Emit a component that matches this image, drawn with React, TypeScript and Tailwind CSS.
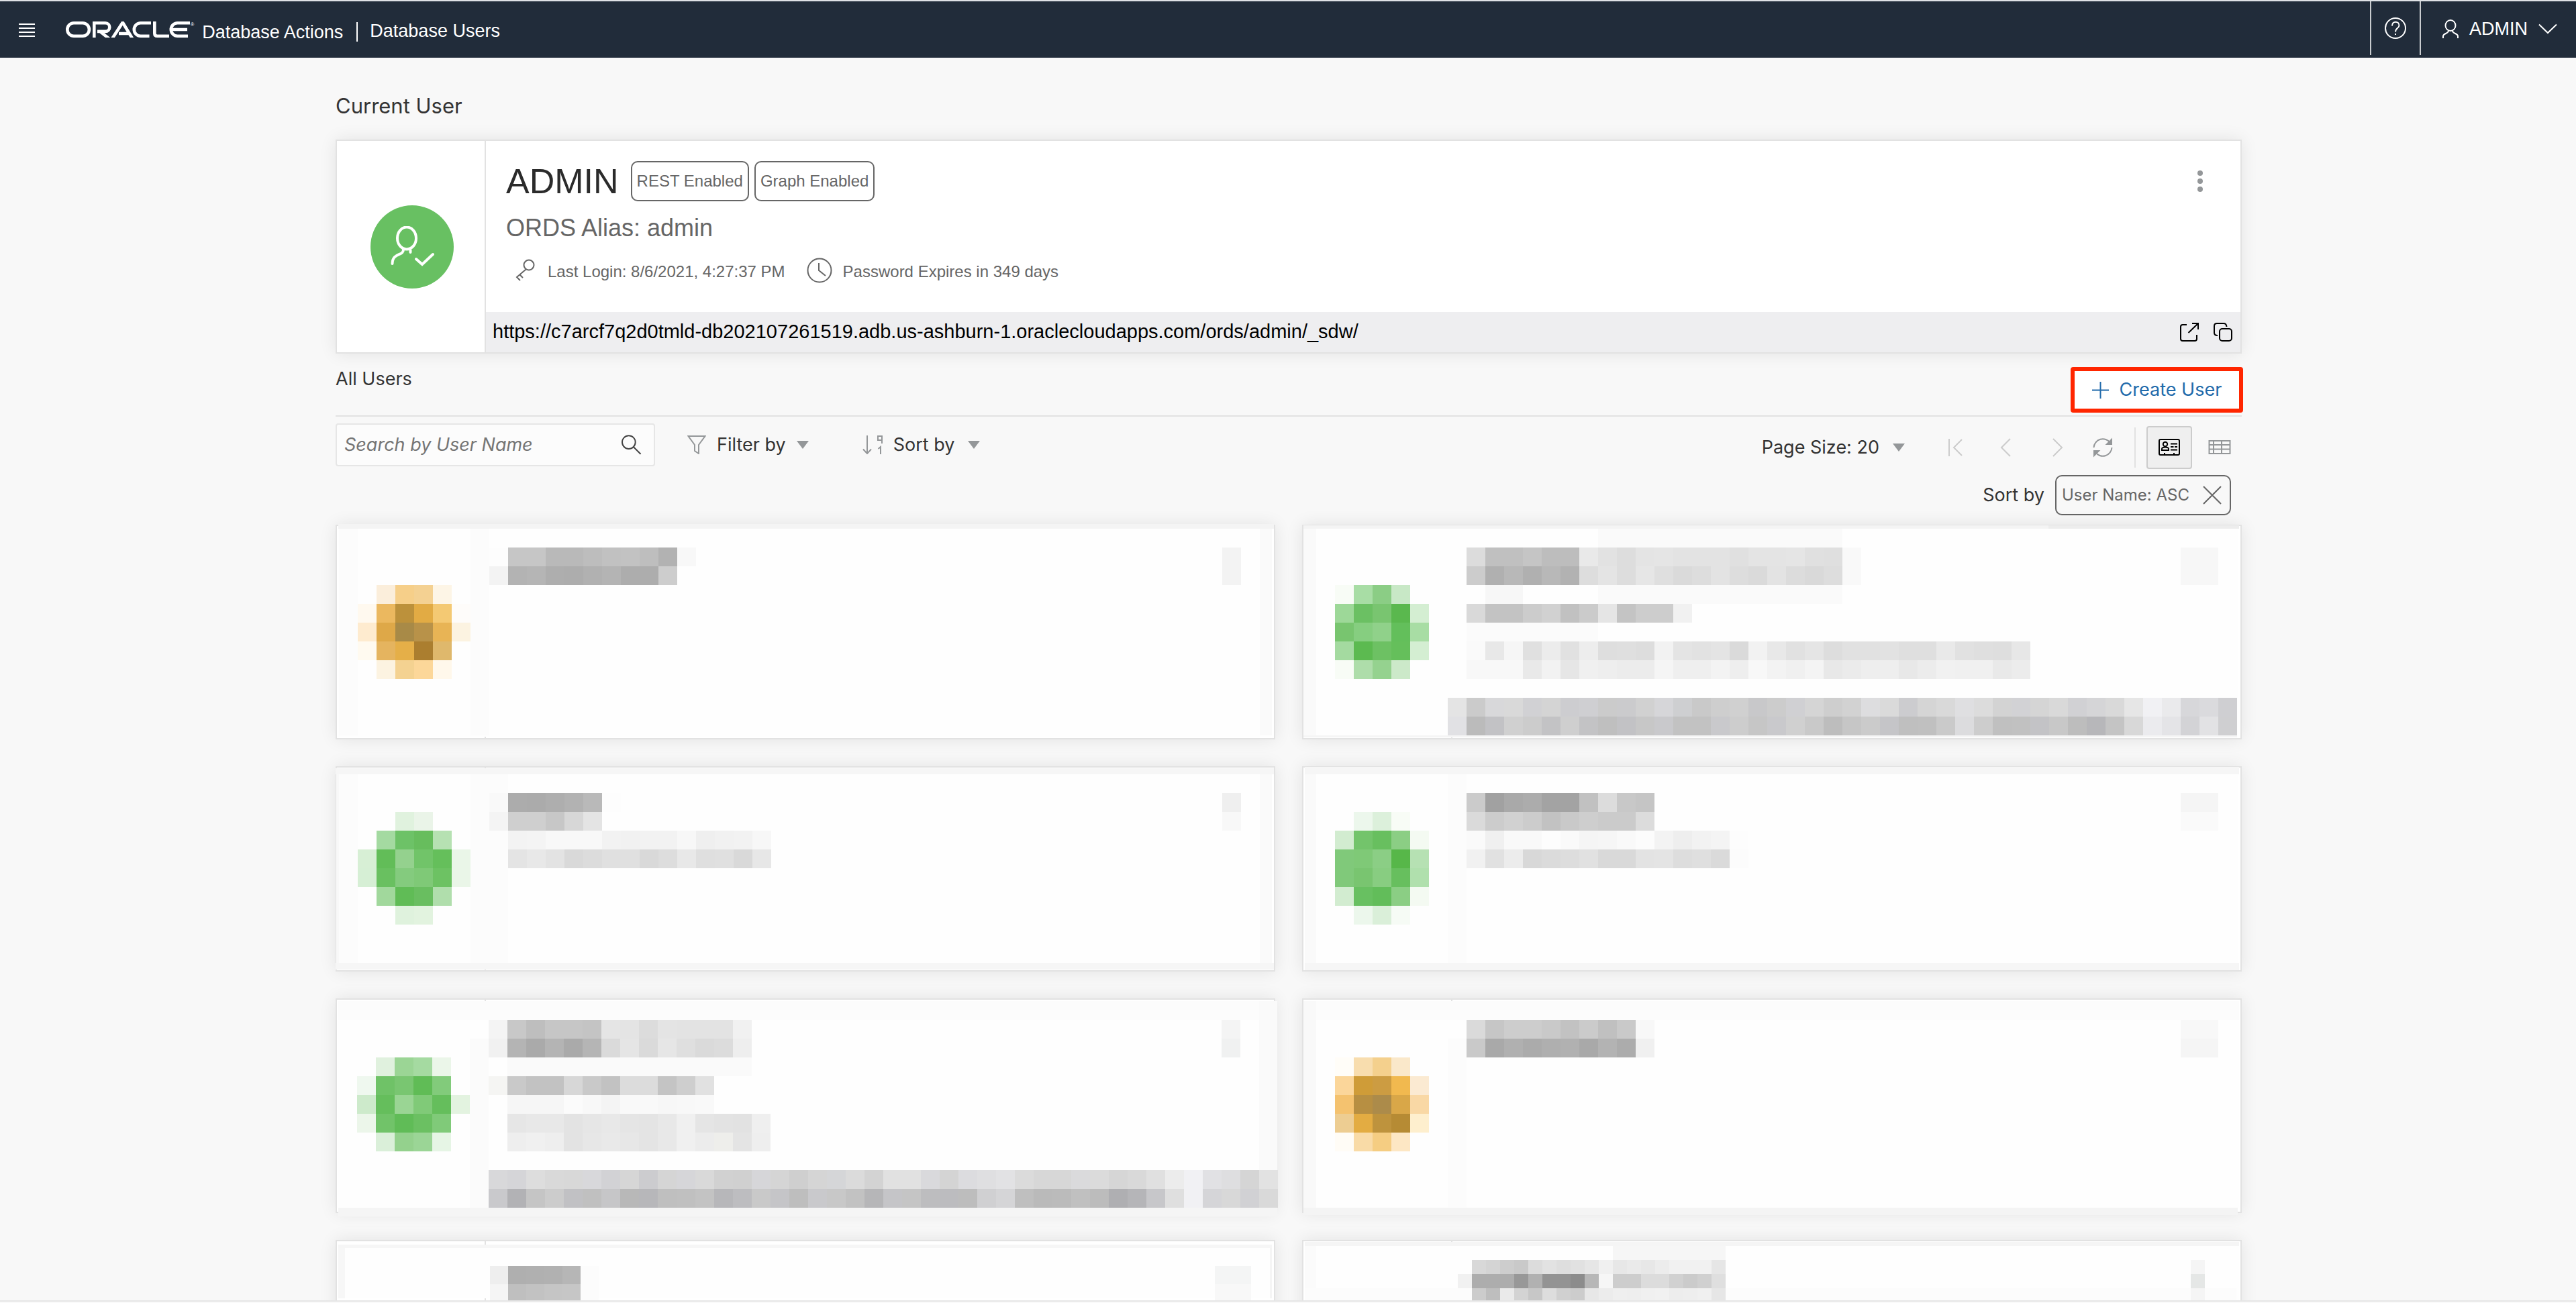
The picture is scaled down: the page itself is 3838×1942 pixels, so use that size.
import React from "react";

type Run = [row: number, col: number, shades: string];

type MosaicSpec = {
  x: number;
  y: number;
  cell: number;
  cover: [x: number, y: number, w: number, h: number];
  bands: [x: number, y: number, w: number, h: number, fill: string][];
  runs: Run[];
};

const toFill = (s: string) => (s.length === 2 ? `#${s}${s}${s}` : `#${s}`);

function Mosaic({ spec }: { spec: MosaicSpec }) {
  const { x, y, cell, cover, bands, runs } = spec;
  return (
    <svg
      className="pointer-events-none absolute -left-0.5 -top-0.5 h-full w-full overflow-visible"
      shapeRendering="crispEdges"
      aria-hidden="true"
    >
      <rect x={cover[0]} y={cover[1]} width={cover[2]} height={cover[3]} fill="#fefefe" />
      {bands.map((b, i) => (
        <rect key={i} x={b[0]} y={b[1]} width={b[2]} height={b[3]} fill={b[4]} />
      ))}
      {runs.flatMap(([row, col, shades], r) =>
        shades
          .split(" ")
          .map((s, i) => (
            <rect
              key={`${r}-${i}`}
              x={x + (col + i) * cell}
              y={y + row * cell}
              width={cell}
              height={cell}
              fill={toFill(s)}
            />
          )),
      )}
    </svg>
  );
}

const users: { height: string; mosaic: MosaicSpec }[] = [
  {
    height: "h-80",
    mosaic: {
      x: 5, y: 6, cell: 28,
      cover: [3, 2, 1390, 314],
      bands: [
        [4, -1, 1394, 7, "#f4f4f4"],
        [5, 6, 28, 308, "#fcfcfc"],
        [201, 6, 28, 308, "#fcfcfc"],
        [1377, 6, 18, 308, "#fafafa"],
      ],
      runs: [
        [1, 8, "fd c6 c6 b9 b9 bd c1 c2 be b2 f8"],
        [2, 8, "f3 b3 b5 ae ad b1 b4 ad ad cd fe"],
        [1, 47, "f3"],
        [2, 47, "f3"],
        [3, 2, "fbeedb f6cf89 f4d192 fdf5e6"],
        [4, 1, "fff9ef ebb85f bc913b e2ab44 f4c973 fefcfa"],
        [5, 1, "feebcf dea848 a88a47 b89249 e8b455 fcf3e1"],
        [6, 1, "fffaf0 e5b45f e5af48 ab7e2f dfb86c"],
        [7, 2, "fcf3e1 f4d291 fcd799 fff8eb"],
      ],
    },
  },
  {
    height: "h-80",
    mosaic: {
      x: 21, y: 6, cell: 28,
      cover: [2, 2, 1392, 314],
      bands: [
        [2, 1, 1110, 5, "#f4f4f4"],
        [1112, 1, 284, 5, "#ededed"],
        [2, 6, 19, 308, "#fafafa"],
        [441, 6, 364, 28, "#fafafa"],
        [441, 90, 364, 28, "#fafafa"],
        [245, 146, 196, 28, "#fbfbfb"],
        [2, 314, 1391, 3, "#f5f5f5"],
      ],
      runs: [
        [1, 8, "dc c0 c0 c5 bd bd e9 e2 dd e4 e5 e3 e3 e3 e0 e4 e4 e5 e0 df f9"],
        [2, 8, "cc b0 b8 b0 b8 b2 dd e4 dd e6 df da dd e3 dd da e3 dc d9 dd f9"],
        [1, 46, "f7 f7"],
        [2, 46, "f7 f7"],
        [3, 1, "f8fcf6 a8dda5 8bcd85 c8e8c6"],
        [3, 9, "f7 f7"],
        [4, 1, "9dd898 6bc063 79c570 5ab84e d4eed2"],
        [4, 8, "d9 c3 c3 cc d1 c1 cb e5 c4 cd cd f1"],
        [5, 1, "78c56f 86ce80 90d18a 63bf5b a8dda4"],
        [6, 1, "a4daa0 5cba50 6dc163 65bf5b d4eed2"],
        [6, 8, "fa e8 f6 e0 ec e1 ed de df dd f2 e4 e2 e4 da f2 e8 e1 e5 dd e1 e1 e2 df df e9 e1 df de e7"],
        [7, 1, "f8fcf6 aeddaa 95d28f cce9c9"],
        [7, 8, "f8 f8 f8 e9 f2 e6 f0 ee ec ec f5 ef ef f3 ee f8 f3 f0 f4 e8 eb ee ee e8 ec f1 f0 f0 e9 ec"],
        [9, 7, "e4 cb d8d8da d9 d1d1d4 d4 cdcdd0 cfcfd2 cb cbcbcd d1 d6d6d9 cecfd1 c9 ce d0 c8c8ca cc d0d0d3 d5 ce d2 dddddf da cccccf d5 d9 dfdfe1 dc d3 d2d2d5 d5 d9 d1d1d4 d5d5d7 d9 e6 f1f1f4 eaeaec d7d7da dadadd cfcfd2"],
        [10, 7, "e1e1e4 bb c2c2c5 d0 cc c3c3c5 cf c3c3c5 bf c2c2c5 c7 c9c9cc c2 c2 c9c9cc cd c6 c9c9cc d0 c9 bd c6 cb c5c5c8 bf c0 ca dcdcde cd c0 c1 c3c3c6 c8 bd b7b7ba c4 d8 ebebee e4e4e7 d3d3d6 e2e2e4 cfcfd1"],
      ],
    },
  },
  {
    height: "h-[306px]",
    mosaic: {
      x: 5, y: 12, cell: 28,
      cover: [2, 3, 1392, 300],
      bands: [
        [0, 3, 1398, 9, "#f6f6f6"],
        [0, 293, 1398, 10, "#f6f6f6"],
        [1, 12, 4, 281, "#f8f8f8"],
        [5, 12, 28, 281, "#fcfcfc"],
        [201, 12, 56, 281, "#fcfcfc"],
        [1377, 12, 18, 281, "#fafafa"],
      ],
      runs: [
        [1, 8, "f9 ac ab ae b2 b9 fd"],
        [2, 3, "e0f2de eaf4e8"],
        [2, 8, "f4 cf cf c7 d7 e4"],
        [1, 47, "ef"],
        [2, 47, "f8"],
        [3, 2, "a4daa1 6dc267 67bd5d b6e1b2"],
        [3, 9, "f3 f4 f8 f8 f8 f2 f1 f2 f2 f7 ef f1 f2 f7"],
        [4, 1, "d7efd5 62bd58 94d18e 71c469 65bf5b eaf6e8"],
        [4, 9, "e4 e8 e3 d9 dc e0 e0 d9 dd e8 df e0 d9 e7"],
        [5, 1, "d6efd5 69c060 84cb7e 7fc977 6dc263 eaf6e8"],
        [6, 2, "a1d89c 60bc56 69be60 b0deac"],
        [7, 3, "dff2dd e2f3df"],
      ],
    },
  },
  {
    height: "h-[306px]",
    mosaic: {
      x: 21, y: 12, cell: 28,
      cover: [4, 2, 1390, 302],
      bands: [
        [4, 1, 1392, 11, "#f6f6f6"],
        [4, 293, 1392, 11, "#f6f6f6"],
        [4, 12, 17, 281, "#fafafa"],
        [217, 12, 28, 281, "#fcfcfc"],
      ],
      runs: [
        [1, 8, "cb a1 a9 ac a3 a3 c1 dc c8 c5"],
        [2, 2, "ecf7ec dcf0db f8fcf6"],
        [2, 8, "da cc d1 cc c2 c9 ce cb cb dc"],
        [1, 46, "f5 f5"],
        [2, 46, "fa fa"],
        [3, 1, "d2ecd0 73c46b 68bf5f 8bce84 f4faf2"],
        [3, 8, "fa f0 f9 f9 fd fa f5 f6 f9 fc f3 ee f2 f4 fd"],
        [4, 1, "80c97a 7fc977 8bce85 57b749 b6e1b3"],
        [4, 8, "f1 e1 ec d8 db dd e1 d9 d9 e3 e4 dd df da fc"],
        [5, 1, "80c97a 79c570 88cd81 67bf5e b0e0ad"],
        [6, 1, "d2ecd0 68c061 62bd5a 8bce84 f4faf2"],
        [7, 2, "ecf7ec daefd9 f6fbf5"],
      ],
    },
  },
  {
    height: "h-80",
    mosaic: {
      x: 4, y: 4, cell: 28,
      cover: [4, 4, 1399, 309],
      bands: [
        [4, 4, 1399, 28, "#fcfcfc"],
        [200, 60, 28, 253, "#fbfbfb"],
        [256, 88, 364, 28, "#fafafa"],
        [1376, 4, 27, 252, "#fafafa"],
        [4, 312, 1399, 13, "#f5f5f5"],
      ],
      runs: [
        [1, 8, "f4 c8 be c6 c6 c4 e5 e4 dc e4 e3 e3 e3 f1"],
        [2, 8, "f1 b4 aa b4 aa b5 da e5 da e6 df da dc ee"],
        [1, 47, "f4"],
        [2, 47, "f0f1f1"],
        [3, 2, "e0f1de 9bd595 a5daa1 ebf6e9"],
        [4, 1, "eff8ef 6fc267 79c671 60bc56 82cb7b"],
        [4, 8, "f5f5f3 c9 c2 c2 d7 c9 c2 dc dc c4 ce e1"],
        [5, 1, "cdeacb 65be5c 9ad594 80ca78 65be5c e3f3e0"],
        [5, 9, "f6 f6 f6 fb f8 f4 f9 f9 f7 f8 f9"],
        [6, 1, "ecf6ea 71c369 60bc57 6bc062 80ca79"],
        [6, 9, "e6 e8 e8 e3 e6 e8 e5 e4 e8 f0 e5 e3 e2 ef"],
        [7, 2, "daefd9 94d18d 9bd596 e6f5e5"],
        [7, 9, "ee f0 ee e3 e7 e9 e7 e4 e8 f0 ec eeeeeb e4 ee"],
        [9, 8, "d8d8da d5d5d8 dd d9 d8 d8d8db d2d2d5 d6 cccccf d5 d6d6d9 d9 d1 d0 d6d6d9 d5 cf d5 d5d6d8 db d3 e1 e1 d9d9dc d4 dcdcdf dfdfe1 e2e2e4 db d7 d7 dadadc db d6 d9 e0 ec f1f1f4 e1e1e4 dedee0 d5 e2"],
        [10, 8, "c9c9cc b2b2b5 c5 cc c1c1c4 c0 c6c6c8 b8 b7b7ba bf c0 c3 b7b7ba bdbdc0 c9 c5c5c8 be c9c9cc c8 c2 b6b6b8 c5c5c8 c5 bdbdbf bcbcbf bd d0d0d2 d5d5d7 bf ba bb c0 bc afafb2 b5b5b8 c7c7ca df f1f1f4 d5d5d8 d8 d1d1d4 d9"],
      ],
    },
  },
  {
    height: "h-80",
    mosaic: {
      x: 21, y: 4, cell: 28,
      cover: [2, 4, 1394, 309],
      bands: [
        [2, 4, 1394, 28, "#fcfcfc"],
        [2, 4, 19, 309, "#f9f9f9"],
        [217, 60, 28, 252, "#fcfcfc"],
        [2, 312, 1392, 11, "#f4f4f4"],
      ],
      runs: [
        [1, 8, "da c6 cd cd c9 c2 cb c0 c9 f8"],
        [2, 8, "c9 a9 b0 ab af b1 a9 b3 ac f0"],
        [1, 46, "f8 f8"],
        [2, 46, "f5 f5"],
        [3, 1, "fffdf8 f8ddae f4d08d fae8ca"],
        [4, 1, "fbd69a cf9c38 cc9c42 f1b94f fbead2"],
        [5, 1, "f4c26f b78f42 ac8b4a d9a748 f9d8a5"],
        [6, 1, "edcd92 e3ac42 be933d b68b34 feefce"],
        [7, 1, "fffcf6 f9dba7 f5cd82 fde7c4"],
      ],
    },
  },
  {
    height: "h-80",
    mosaic: {
      x: 14, y: 39, cell: 27,
      cover: [4, 7, 1390, 80],
      bands: [
        [4, 7, 1391, 5, "#f6f6f6"],
        [4, 12, 10, 75, "#f7f7f7"],
        [1392, 12, 3, 75, "#f5f5f5"],
      ],
      runs: [
        [0, 8, "ee af b0 b1 b6 fc"],
        [1, 8, "f5 bf c2 c5 c6 fc"],
        [0, 48, "f4f5f5 f4f5f5"],
        [1, 48, "f8 f8"],
      ],
    },
  },
  {
    height: "h-80",
    mosaic: {
      x: 253, y: 30, cell: 21,
      cover: [4, 3, 1392, 100],
      bands: [
        [4, 3, 1392, 6, "#f5f5f5"],
        [4, 9, 17, 90, "#fbfbfb"],
        [463, 9, 168, 21, "#f6f6f6"],
        [4, 72, 1388, 22, "#fcfcfc"],
      ],
      runs: [
        [0, 0, "d8 d4 cd c9 dc e2 de e1 e6 f0 e7 ea e7 ec f1 f1 f1 e6"],
        [1, -1, "f1 ad ad ad 98 b1 93 93 8c b7 f6 cd cd dc dc d1 cb d0 df"],
        [2, 0, "cc be ea d3 c7 dd d0 cc e7 ec ef ee f0 f1 ed ee f0 e6"],
        [0, 51, "f5"],
        [1, 51, "e5e7e6"],
        [2, 51, "f5"],
      ],
    },
  },
];

function OracleLogo() {
  return (
    <svg width="186" height="24" viewBox="0 0 186 24" fill="none" stroke="#fff" strokeWidth="4.6" role="img" aria-label="Oracle">
      <rect x="2.3" y="2.3" width="32.6" height="19.4" rx="9.7" />
      <path d="M42.3 24V2.3H59a6.3 6.3 0 0 1 0 12.6H47M50.500 14.500L64.500 25.500" />
      <path d="M69.500 25L84.800 1.500L99 25M79 18H95" />
      <path d="M127 2.300H111.500a9.700 9.700 0 0 0 0 19.400H124.500" />
      <path d="M132.300 0V17.700Q132.300 21.700 136.300 21.700H154" />
      <path d="M185 2.300H166.500a9.700 9.700 0 0 0 0 19.400H182M158 12H181" />
    </svg>
  );
}

function Caret() {
  return (
    <svg width="18" height="12" viewBox="0 0 18 12" aria-hidden="true">
      <path d="M0 0H18L9 12Z" fill="#949799" />
    </svg>
  );
}

function Header() {
  return (
    <header className="flex h-[86px] shrink-0 items-center border-t-2 border-[#dfe2e6] bg-[#212c3a] text-[27px] text-white">
      <button type="button" aria-label="Navigation menu" className="ml-7 mt-px">
        <svg width="24" height="20" viewBox="0 0 24 20" fill="#fff" aria-hidden="true">
          <path d="M0 0h24v2H0zM0 6h24v2H0zM0 12h24v2H0zM0 18h24v2H0z" />
        </svg>
      </button>
      <div className="ml-[46px] flex items-start">
        <OracleLogo />
        <span className="text-[7px] leading-[10px]">®</span>
      </div>
      <span className="ml-3 mt-2">Database Actions</span>
      <span className="ml-5 mt-1.5 h-[29px] w-0.5 bg-white" />
      <h1 className="ml-[18px] mt-1">Database Users</h1>
      <div className="ml-auto flex items-center self-stretch">
        <button
          type="button"
          aria-label="Help"
          className="mb-1 flex w-[76px] items-center justify-center self-stretch border-x-2 border-[#c9cccf]"
        >
          <svg width="32" height="32" viewBox="0 0 32 32" fill="none" stroke="#fff" strokeWidth="2" aria-hidden="true">
            <circle cx="16" cy="16" r="15" />
            <path d="M11 12.500C11 4.500 21.500 5 21.500 12C21.500 16 16 15.500 16 21.500" />
            <path d="M15 24h2v2h-2z" fill="#fff" stroke="none" />
          </svg>
        </button>
        <button type="button" className="ml-8 mr-7 flex items-center pb-0.5">
          <svg width="24" height="28" viewBox="0 0 24 28" fill="none" stroke="#fff" strokeWidth="2" aria-hidden="true">
            <ellipse cx="12" cy="9" rx="7.500" ry="8" />
            <path d="M1 28V25C1 20 9 22 9 16.500M23 28V25C23 20 15 22 15 16.500" />
          </svg>
          <span className="ml-4">ADMIN</span>
          <svg className="ml-4" width="28" height="16" viewBox="0 0 28 16" fill="none" stroke="#fff" strokeWidth="2" aria-hidden="true">
            <path d="M1 1.500L14 14L27 1.500" />
          </svg>
        </button>
      </div>
    </header>
  );
}

function CurrentUser() {
  return (
    <section
      aria-label="Current user"
      className="mt-[30px] flex h-[319px] border-2 border-[#e2e2e2] bg-white shadow-[0_0_24px_rgba(0,0,0,0.09)]"
    >
      <div className="flex w-[222px] shrink-0 items-center justify-center border-r-2 border-[#e2e2e2] pl-1">
        <div className="flex size-[124px] items-center justify-center rounded-full bg-[#68c062]">
          <svg width="66" height="62" viewBox="0 0 66 62" fill="none" stroke="#fff" strokeWidth="4" strokeLinecap="round" aria-hidden="true">
            <ellipse cx="25" cy="18" rx="14" ry="16.500" />
            <path d="M20 35C20 45 4 39 3.500 56M30.500 36V39" />
            <path d="M39 49L48 57L64 42" />
          </svg>
        </div>
      </div>
      <div className="flex min-w-0 grow flex-col">
        <div className="flex grow items-start pl-[30px] pt-[30px]">
          <div className="text-2xl text-[#666]">
            <div className="flex items-center">
              <h3 className="text-[52px] leading-[60px] text-[#2b2b2b]">ADMIN</h3>
              <span className="ml-[18px] flex h-[60px] items-center rounded-[10px] border-2 border-[#666] px-[7px]">REST Enabled</span>
              <span className="ml-2 flex h-[60px] items-center rounded-[10px] border-2 border-[#666] px-[7px]">Graph Enabled</span>
            </div>
            <p className="mt-5 text-4xl leading-10">ORDS Alias: admin</p>
            <div className="mt-[23px] flex h-10 items-center pl-3">
              <svg width="32" height="34" viewBox="0 0 32 34" fill="none" stroke="#666" strokeWidth="2" aria-hidden="true">
                <circle cx="22" cy="9" r="7.500" />
                <path d="M17.500 15.500L4 27L9 32M8.500 23.500L13 28" />
              </svg>
              <span className="ml-[18px] mt-1">Last Login: 8/6/2021, 4:27:37 PM</span>
              <svg className="ml-8" width="38" height="38" viewBox="0 0 38 38" fill="none" stroke="#666" strokeWidth="2" aria-hidden="true">
                <circle cx="19" cy="19" r="17.500" />
                <path d="M18 8V19L28 27" />
              </svg>
              <span className="ml-4 mt-1">Password Expires in 349 days</span>
            </div>
          </div>
          <button type="button" aria-label="User actions" className="ml-auto mr-14 mt-[13px]">
            <svg width="8" height="34" viewBox="0 0 8 34" fill="#949799" aria-hidden="true">
              <circle cx="4" cy="5" r="4" />
              <circle cx="4" cy="17" r="4" />
              <circle cx="4" cy="29" r="4" />
            </svg>
          </button>
        </div>
        <div className="flex h-[60px] shrink-0 items-center bg-[#eeeef0] pl-2.5 pr-3 text-[29px] text-black">
          <a href="https://c7arcf7q2d0tmld-db202107261519.adb.us-ashburn-1.oraclecloudapps.com/ords/admin/_sdw/">
            https://c7arcf7q2d0tmld-db202107261519.adb.us-ashburn-1.oraclecloudapps.com/ords/admin/_sdw/
          </a>
          <button type="button" aria-label="Open in new tab" className="ml-auto">
            <svg width="28" height="30" viewBox="0 0 28 30" fill="none" stroke="#000" strokeWidth="2" aria-hidden="true">
              <path d="M10 4H4Q1 4 1 7V25Q1 28 4 28H22Q25 28 25 25V19M12.500 16L27 2M18 2H27V11" />
            </svg>
          </button>
          <button type="button" aria-label="Copy link" className="ml-[22px]">
            <svg width="28" height="30" viewBox="0 0 28 30" fill="none" stroke="#000" strokeWidth="2" aria-hidden="true">
              <rect x="9" y="10" width="18" height="18" rx="4" />
              <path d="M6 20Q1 20 1 16V6Q1 2 5 2H15Q19 2 19.500 7" />
            </svg>
          </button>
        </div>
      </div>
    </section>
  );
}

function Toolbar() {
  return (
    <div className="flex items-start justify-between pt-2.5 font-[Inter,sans-serif] text-[27px] text-[#333]">
      <div className="flex h-16 items-center">
        <label className="flex h-16 w-[476px] items-center rounded border-2 border-[#e6e6e6] bg-[#fcfcfc] pl-[11px] pr-[18px]">
          <input
            type="text"
            aria-label="Search by User Name"
            placeholder="Search by User Name"
            className="min-w-0 grow bg-transparent italic outline-none placeholder:text-[#757575]"
          />
          <svg width="30" height="30" viewBox="0 0 30 30" fill="none" stroke="#444" strokeWidth="2" aria-hidden="true">
            <circle cx="11" cy="11" r="10" />
            <path d="M18 18L29 29" />
          </svg>
        </label>
        <button type="button" className="ml-12 flex items-center">
          <svg width="28" height="28" viewBox="0 0 28 28" fill="none" stroke="#949799" strokeWidth="2" aria-hidden="true">
            <path d="M1.500 1H26.500L17 14V27L11 23V14Z" />
          </svg>
          <span className="mx-4">Filter by</span>
          <Caret />
        </button>
        <button type="button" className="ml-20 flex items-center">
          <svg width="30" height="28" viewBox="0 0 30 28" fill="none" stroke="#949799" strokeWidth="2" aria-hidden="true">
            <path d="M7 0V27M1 20.500L7 27L13 20.500M29 12V1H23V7H29M23.500 20L27 17V28" />
          </svg>
          <span className="ml-4 mr-5">Sort by</span>
          <Caret />
        </button>
      </div>
      <div className="mt-1 flex h-16 items-center pr-4">
        <button type="button" className="flex items-center">
          <span className="mr-5">Page Size: 20</span>
          <Caret />
        </button>
        <button type="button" aria-label="First page" disabled className="ml-16">
          <svg width="22" height="26" viewBox="0 0 22 26" fill="none" stroke="#ccc" strokeWidth="2" aria-hidden="true">
            <path d="M2 0V26M21 1L9 13L21 25" />
          </svg>
        </button>
        <button type="button" aria-label="Previous page" disabled className="ml-14">
          <svg width="16" height="28" viewBox="0 0 16 28" fill="none" stroke="#ccc" strokeWidth="2" aria-hidden="true">
            <path d="M15 1L2 14L15 27" />
          </svg>
        </button>
        <button type="button" aria-label="Next page" disabled className="ml-[62px]">
          <svg width="16" height="28" viewBox="0 0 16 28" fill="none" stroke="#ccc" strokeWidth="2" aria-hidden="true">
            <path d="M1 1L14 14L1 27" />
          </svg>
        </button>
        <button type="button" aria-label="Refresh" className="ml-11">
          <svg width="30" height="30" viewBox="0 0 30 30" fill="none" stroke="#949799" strokeWidth="2" aria-hidden="true">
            <path d="M1.500 15A13.500 13.500 0 0 1 26 8M28.500 15A13.500 13.500 0 0 1 4 22" />
            <path d="M28 3V10H21ZM2 27V20H9Z" fill="#949799" />
          </svg>
        </button>
        <span className="ml-8 mr-4 h-[60px] w-0.5 bg-[#e2e2e2]" />
        <button type="button" aria-label="Card view" aria-pressed="true" className="flex h-16 w-[68px] items-center justify-center rounded border-2 border-[#ccc] bg-[#efefef]">
          <svg width="32" height="26" viewBox="0 0 32 26" fill="none" stroke="#000" strokeWidth="2" aria-hidden="true">
            <rect x="1" y="1" width="30" height="23" rx="2" />
            <circle cx="10" cy="8" r="3.200" />
            <path d="M5 17V15Q5 12.500 10 12.500Q15 12.500 15 15V17ZM18 7.500H28M18 12H22.500M24 12H28M18 16.500H28M9 24V21M23 24V21" />
          </svg>
        </button>
        <button type="button" aria-label="Table view" className="ml-6">
          <svg width="34" height="22" viewBox="0 0 34 22" fill="none" stroke="#949799" strokeWidth="2" aria-hidden="true">
            <path d="M1.500 1H32.500V20H1.500ZM1.500 7H32.500M1.500 13.500H32.500M8 1V20M20 1V20" />
          </svg>
        </button>
      </div>
    </div>
  );
}

export default function App() {
  return (
    <div className="flex h-screen flex-col overflow-hidden bg-[#fafafa] font-['Liberation_Sans',Arial,sans-serif]">
      <Header />
      <main className="mb-0.5 min-h-0 grow overflow-hidden border-b-2 border-[#e6e6e6] bg-[#f8f8f8] pl-[500px] pr-[498px]">
        <h2 className="mt-[52px] font-[Inter,sans-serif] text-[31px] leading-10 text-[#333]">Current User</h2>
        <CurrentUser />
        <div className="flex items-start justify-between border-b-2 border-[#e2e2e2] pb-1 pt-5 font-[Inter,sans-serif] text-[27px] leading-9">
          <h2 className="text-[#333]">All Users</h2>
          <button
            type="button"
            className="-mr-0.5 flex h-[68px] w-[257px] items-center justify-center gap-4 rounded-sm border-[6px] border-[#ff2600] bg-white text-[#226bab]"
          >
            <svg width="25" height="25" viewBox="0 0 25 25" stroke="#226bab" strokeWidth="2" aria-hidden="true">
              <path d="M12.500 0V25M0 12.500H25" />
            </svg>
            Create User
          </button>
        </div>
        <Toolbar />
        <div className="mr-4 mt-[9px] flex items-center justify-end gap-4 font-[Inter,sans-serif] text-[27px] text-[#333]">
          <span>Sort by</span>
          <span className="flex h-[60px] items-center rounded-[10px] border-2 border-[#666] pl-2 pr-3 text-2xl text-[#666]">
            User Name: ASC
            <button type="button" aria-label="Remove sort" className="ml-5">
              <svg width="28" height="28" viewBox="0 0 28 28" stroke="#666" strokeWidth="2" aria-hidden="true">
                <path d="M1 1L27 27M27 1L1 27" />
              </svg>
            </button>
          </span>
        </div>
        <ul className="mt-3.5 grid grid-cols-2 gap-10">
          {users.map((u, i) => (
            <li
              key={i}
              className={`relative flex border-2 border-[#e2e2e2] bg-white shadow-[0_0_24px_rgba(0,0,0,0.09)] ${u.height}`}
            >
              <div className="w-[222px] border-r-2 border-[#e2e2e2]" />
              <Mosaic spec={u.mosaic} />
            </li>
          ))}
        </ul>
      </main>
    </div>
  );
}
